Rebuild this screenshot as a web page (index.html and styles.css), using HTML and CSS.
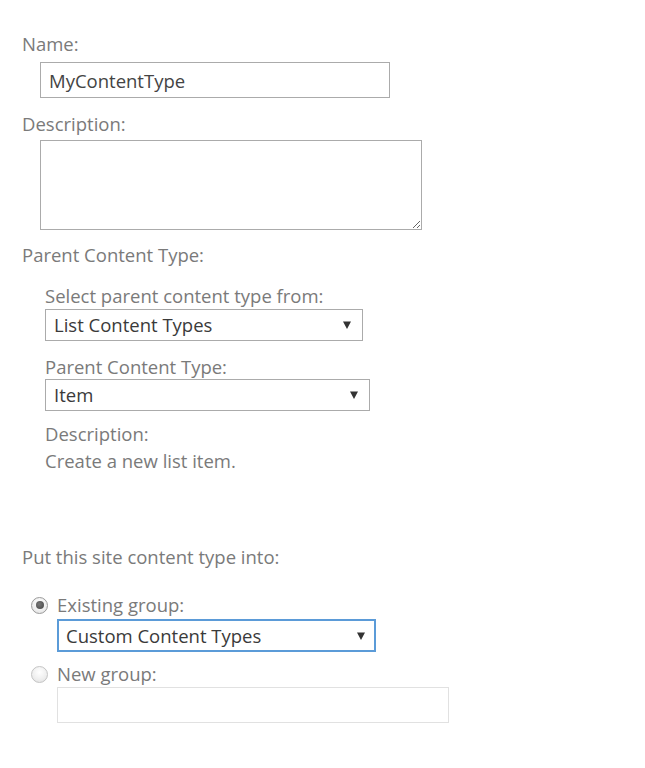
FILE: index.html
```html
<!DOCTYPE html>
<html>
<head>
<meta charset="utf-8">
<link rel="stylesheet" href="styles.css">
</head>
<body>
<div class="form">
  <div class="label l-name">Name:</div>
  <input class="text-input name-input" type="text" value="MyContentType">
  <div class="label l-desc">Description:</div>
  <textarea class="desc-area"></textarea>
  <div class="label l-parent">Parent Content Type:</div>
  <div class="sub">
    <div class="label l-from">Select parent content type from:</div>
    <div class="select sel-from"><span>List Content Types</span><svg class="arrow" width="8" height="8" viewBox="0 0 8 8"><path d="M0 0.5H8L4 8Z" fill="#333"/></svg></div>
    <div class="label l-pct">Parent Content Type:</div>
    <div class="select sel-item"><span>Item</span><svg class="arrow" width="8" height="8" viewBox="0 0 8 8"><path d="M0 0.5H8L4 8Z" fill="#333"/></svg></div>
    <div class="label l-desc2">Description:</div>
    <div class="label l-create">Create a new list item.</div>
  </div>
  <div class="label l-put">Put this site content type into:</div>
  <div class="group">
    <div class="radio-row r-existing"><span class="radio checked"></span><span class="label">Existing group:</span></div>
    <div class="select sel-group focused"><span>Custom Content Types</span><svg class="arrow" width="8" height="8" viewBox="0 0 8 8"><path d="M0 0.5H8L4 8Z" fill="#333"/></svg></div>
    <div class="radio-row r-new"><span class="radio"></span><span class="label">New group:</span></div>
    <div class="text-input new-input"></div>
  </div>
</div>
</body>
</html>
```
FILE: styles.css
```css
html, body {
  margin: 0;
  padding: 0;
  background: #ffffff;
}
body {
  font-family: "Open Sans", "Noto Sans", sans-serif;
  font-size: 18.5px;
  line-height: 22px;
  color: #777777;
}
.form {
  display: flex;
  flex-direction: column;
  align-items: flex-start;
  padding: 33px 0 0 22px;
}
.label {
  color: #7a7a7a;
  white-space: nowrap;
}
.text-input {
  box-sizing: border-box;
  height: 36px;
  border: 1px solid #ababab;
  background: #fff;
  font-family: inherit;
  font-size: 18.5px;
  color: #444444;
  padding: 0 8px;
  margin: 0;
  outline: none;
}
.name-input {
  width: 350px;
  margin: 7px 0 0 18px;
}
.l-desc { margin-top: 15px; }
.desc-area {
  box-sizing: border-box;
  width: 382px;
  height: 90px;
  margin: 5px 0 0 18px;
  border: 1px solid #ababab;
  font-family: inherit;
  font-size: 18.5px;
  padding: 4px 8px;
  outline: none;
}
.l-parent { margin-top: 14px; }
.sub {
  display: flex;
  flex-direction: column;
  align-items: flex-start;
  padding-left: 23px;
  margin-top: 19px;
}
.select {
  box-sizing: border-box;
  display: flex;
  align-items: center;
  justify-content: space-between;
  height: 32px;
  border: 1px solid #ababab;
  padding: 0 11px 0 8px;
  color: #3a3a3a;
  background: #fff;
}
.sel-from { width: 318px; margin-top: 2px; }
.l-pct { margin-top: 15px; }
.sel-item { width: 325px; margin-top: 1px; }
.l-desc2 { margin-top: 12px; }
.l-create { margin-top: 5px; }
.l-put { margin-top: 74px; }
.group {
  display: flex;
  flex-direction: column;
  align-items: flex-start;
  margin-top: 26px;
  padding-left: 9px;
}
.radio-row {
  display: flex;
  align-items: center;
  gap: 9px;
}
.radio {
  box-sizing: border-box;
  width: 17px;
  height: 17px;
  border-radius: 50%;
  border: 1px solid #c4c4c4;
  background: radial-gradient(circle at 50% 35%, #ffffff 0%, #eeeeee 60%, #dddddd 100%);
  display: flex;
  align-items: center;
  justify-content: center;
}
.radio.checked {
  border-color: #9a9a9a;
}
.radio.checked::after {
  content: "";
  width: 8px;
  height: 8px;
  border-radius: 50%;
  background: radial-gradient(circle at 40% 40%, #777 0%, #444 100%);
}
.sel-group {
  width: 319px;
  height: 33px;
  margin: 3px 0 0 26px;
  border: 2px solid #5b9bd8;
  padding-left: 7px;
  padding-right: 9px;
}
.r-new { margin-top: 11px; }
.new-input {
  width: 392px;
  height: 36px;
  margin: 2px 0 0 26px;
  border-color: #e1e1e1;
}
```
